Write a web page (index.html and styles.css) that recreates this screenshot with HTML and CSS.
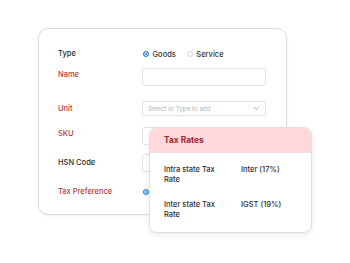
FILE: index.html
```html
<!DOCTYPE html>
<html>
<head>
<meta charset="utf-8">
<link rel="stylesheet" href="styles.css">
</head>
<body>
<div class="stage">
  <div class="card">
    <div class="row r-type">
      <div class="label">Type</div>
      <div class="ctrl radios">
        <span class="radio on"></span><span class="opt">Goods</span>
        <span class="radio"></span><span class="opt">Service</span>
      </div>
    </div>
    <div class="row r-name">
      <div class="label req">Name</div>
      <div class="ctrl"><div class="input tall"></div></div>
    </div>
    <div class="row r-unit">
      <div class="label req">Unit</div>
      <div class="ctrl"><div class="input select"><span class="ph">Select or Type to add</span>
        <svg class="chev" width="5" height="3" viewBox="0 0 5 3"><path d="M0.5 0.5 L2.5 2.5 L4.5 0.5" fill="none" stroke="#888" stroke-width="0.8"/></svg></div></div>
    </div>
    <div class="row r-sku">
      <div class="label req">SKU</div>
      <div class="ctrl"><div class="input tall"></div></div>
    </div>
    <div class="row r-hsn">
      <div class="label">HSN Code</div>
      <div class="ctrl"><div class="input tall"></div></div>
    </div>
    <div class="row r-tax">
      <div class="label req">Tax Preference</div>
      <div class="ctrl radios"><span class="radio on"></span><span class="opt">Taxable</span></div>
    </div>
  </div>

  <div class="popup">
    <div class="pop-head">Tax Rates</div>
    <div class="pop-body">
      <div class="pop-row">
        <div class="pop-k">Intra state Tax Rate</div>
        <div class="pop-v">Inter (17%)</div>
      </div>
      <div class="pop-row">
        <div class="pop-k">Inter state Tax Rate</div>
        <div class="pop-v">IGST (19%)</div>
      </div>
    </div>
  </div>
</div>
</body>
</html>
```

FILE: styles.css
```css
* { box-sizing: border-box; }
html, body { margin: 0; padding: 0; background: #fff; }
body {
  font-family: Inter, "Noto Sans", "Liberation Sans", sans-serif;
  font-size: 7.5px;
  font-weight: 500;
  color: #2b2b2b;
  width: 350px;
  height: 263px;
  overflow: hidden;
}
.stage {
  position: relative;
  width: 350px;
  height: 263px;
  padding: 28px 0 0 38px;
}
.card {
  width: 249px;
  height: 187px;
  border: 1px solid #dcdcdc;
  border-radius: 10px;
  background: #fff;
  box-shadow: 0 1px 3px rgba(0,0,0,0.06);
  padding: 0 20px 0 19px;
  display: flex;
  flex-direction: column;
}
.row {
  display: flex;
  align-items: flex-start;
}
.label {
  width: 84px;
  flex: none;
  line-height: 12px;
  white-space: nowrap;
}
.label.req { color: #b83a3a; }
.ctrl { width: 124px; flex: none; }
.radios {
  display: flex;
  align-items: center;
  height: 12px;
  padding-left: 1px;
}
.radio {
  width: 6px;
  height: 6px;
  border-radius: 50%;
  border: 1px solid #d6d6d6;
  background: #fff;
  flex: none;
}
.radio.on {
  border: 1.6px solid #1f80dc;
  background: #1f80dc;
  box-shadow: inset 0 0 0 1px #fff;
}
.opt { margin-left: 3.5px; margin-right: 11px; color: #333; }

.input {
  width: 124px;
  height: 18px;
  border: 1px solid #e2e2e2;
  border-radius: 2px;
  background: #fff;
}
.select {
  height: 15px;
  display: flex;
  align-items: center;
  justify-content: space-between;
  padding: 0 5px 0 5px;
}
.ph { font-size: 6.2px; font-weight: 400; color: #b4b4b4; }
.chev { margin-right: 1px; }

.r-type { margin-top: 19px; height: 12px; }
.r-name { margin-top: 8px; }
.r-name .label { padding-top: 1px; }
.r-unit { margin-top: 15px; }
.r-unit .label { line-height: 15px; }
.r-sku { margin-top: 11px; }
.r-sku .label { padding-top: 1px; }
.r-hsn { margin-top: 9px; }
.r-hsn .label { line-height: 17px; }
.r-tax { margin-top: 14px; }

.popup {
  position: absolute;
  left: 149px;
  top: 127px;
  width: 163px;
  height: 106px;
  background: #fff;
  border: 1px solid #e0e0e0;
  border-radius: 8px;
  box-shadow: 0 2px 6px rgba(0,0,0,0.08);
  overflow: hidden;
}
.pop-head {
  height: 25px;
  background: #fdd8dc;
  color: #a3262d;
  font-weight: 700;
  font-size: 8.4px;
  line-height: 25px;
  padding-left: 14px;
}
.pop-body {
  padding: 12px 0 0 14px;
  display: flex;
  flex-direction: column;
  gap: 15px;
}
.pop-row { display: flex; line-height: 10px; }
.pop-k { width: 77px; padding-right: 18px; }
.pop-v { white-space: nowrap; }
```
